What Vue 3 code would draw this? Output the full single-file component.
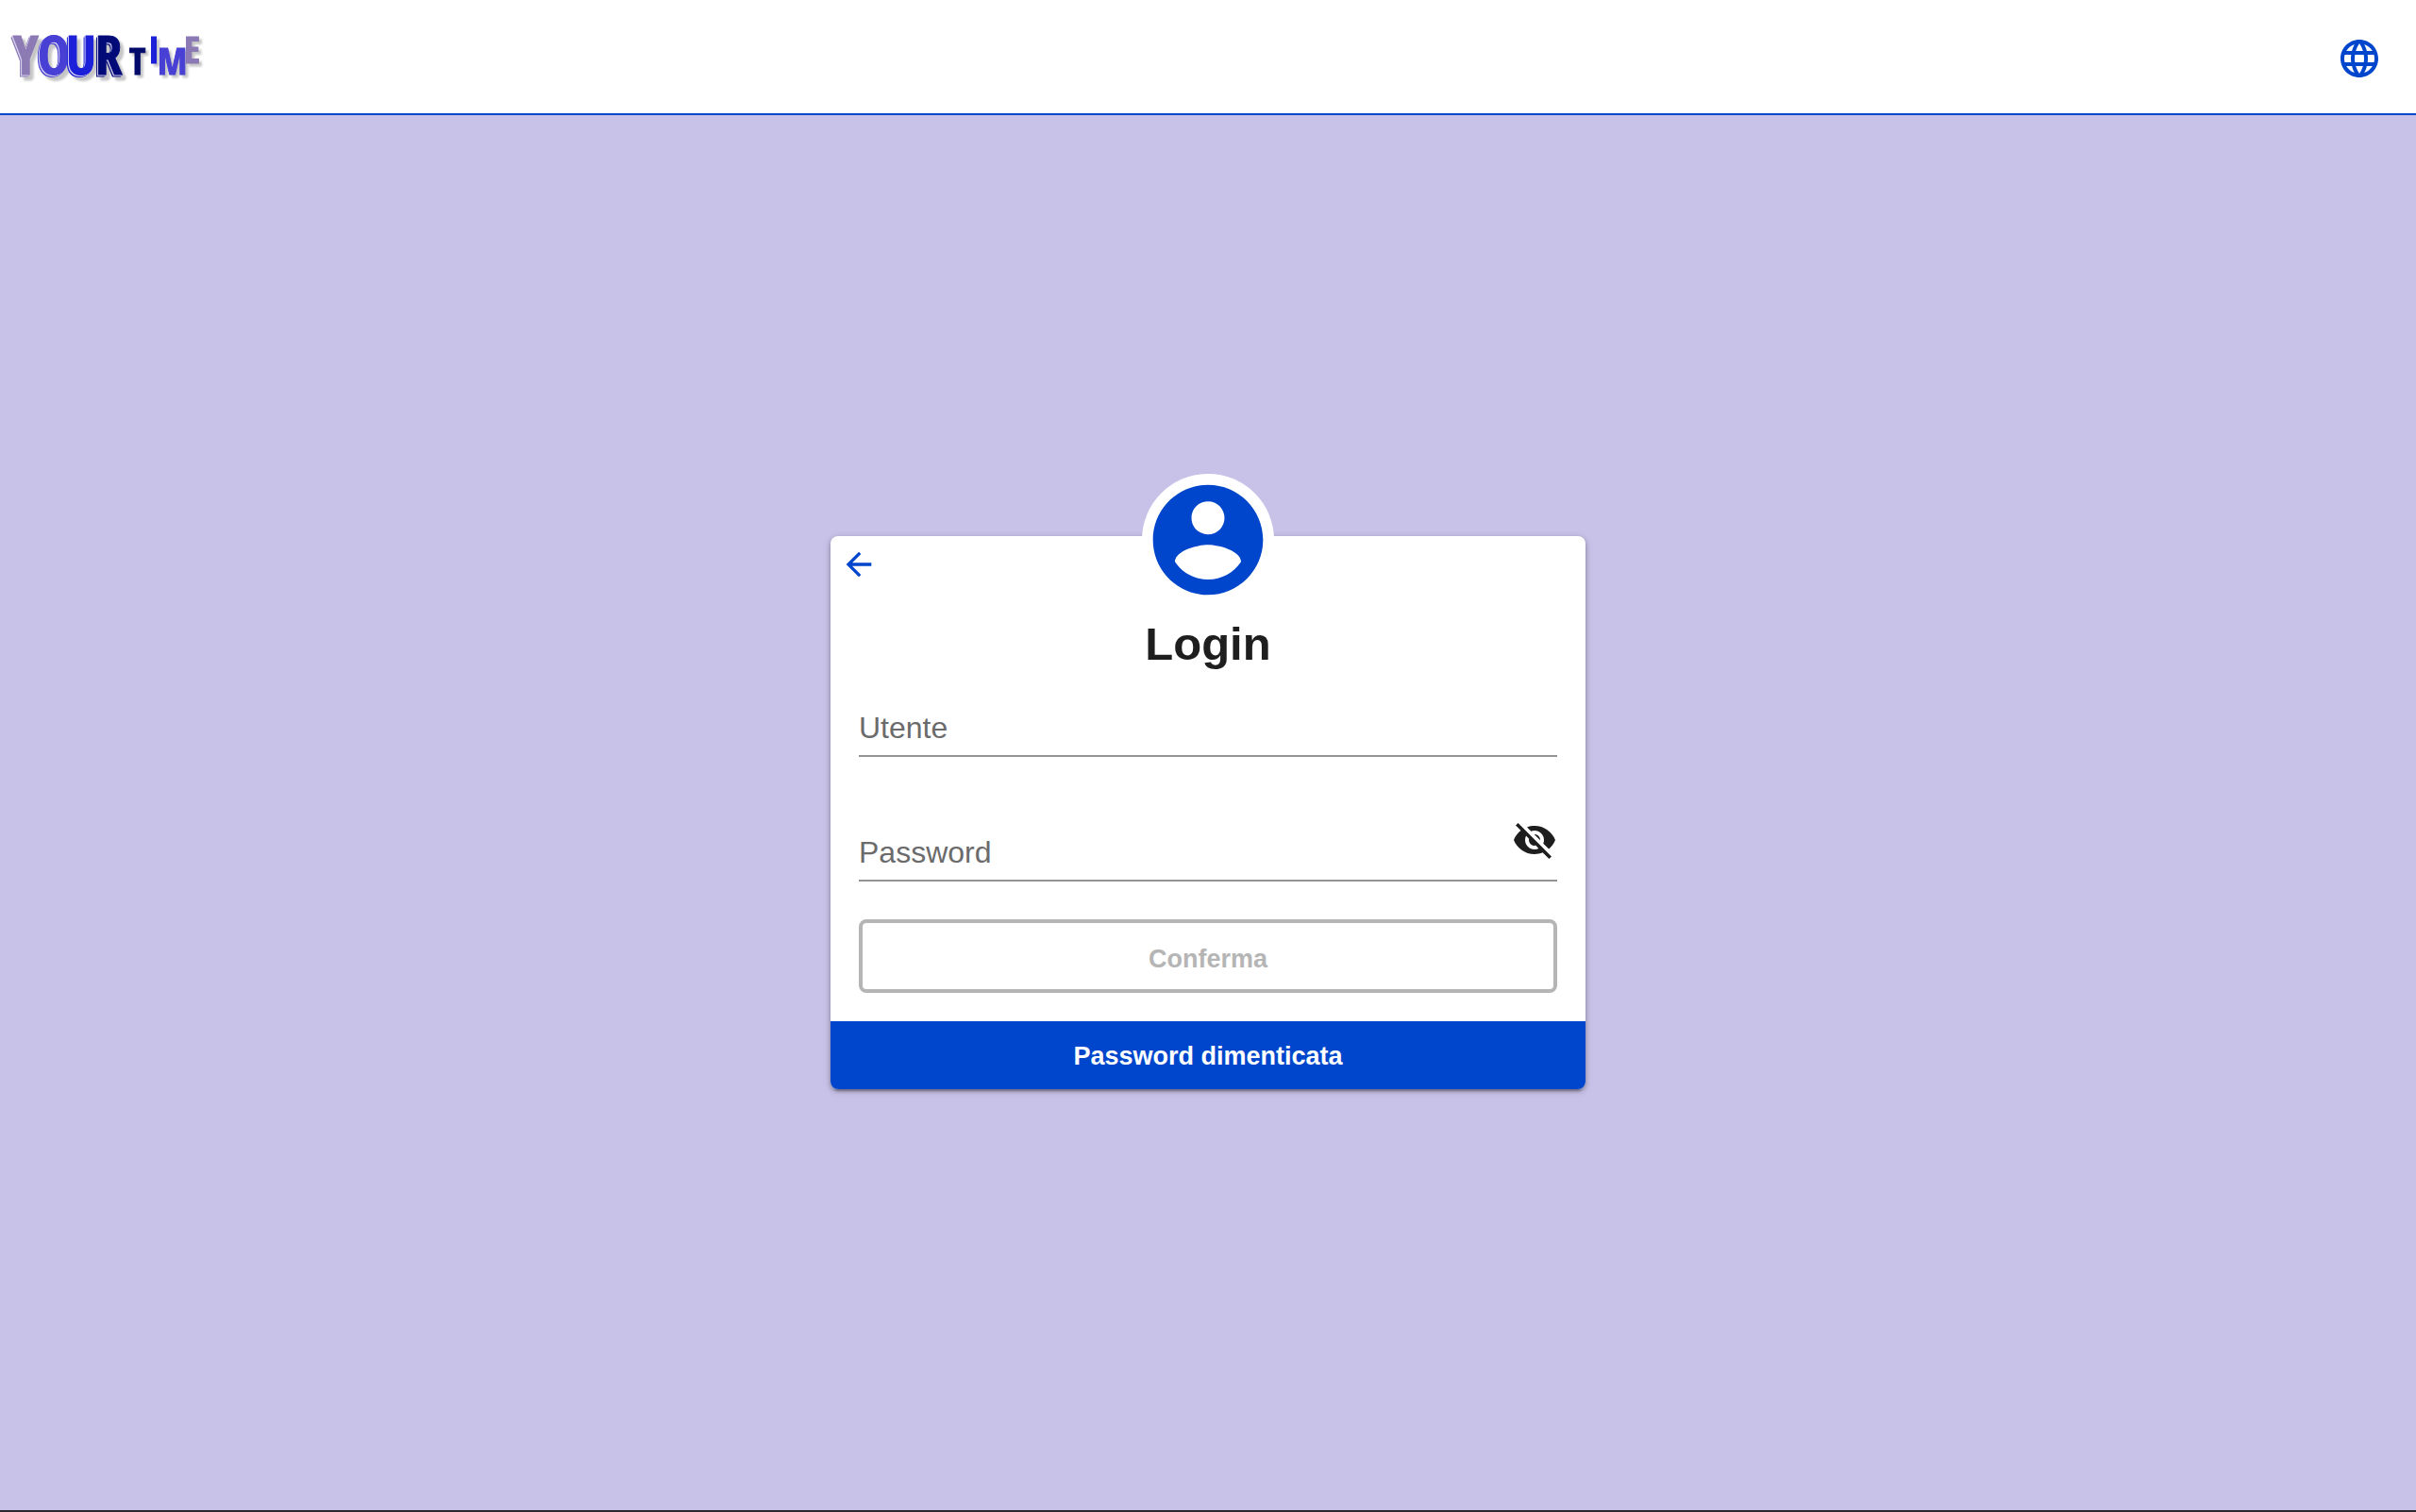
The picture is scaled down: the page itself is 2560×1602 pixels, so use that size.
<template>
  <div class="page">
    <header class="topbar">
      <a href="/" class="logo" aria-label="YOUR TIME">
        <svg width="208" height="64" viewBox="0 0 208 64">
          <g class="logo-your">
            <text v-for="l in yourLetters" :key="l.char" :x="l.x" :y="l.y" :color="l.color">{{ l.char }}</text>
          </g>
          <g class="logo-time">
            <text v-for="l in timeLetters" :key="l.char" :x="l.x" :y="l.y" :color="l.color">{{ l.char }}</text>
          </g>
        </svg>
      </a>
      <button type="button" class="icon-btn" aria-label="Lingua">
        <svg width="48" height="48" viewBox="0 0 24 24" fill="currentColor">
          <path d="M11.99 2C6.47 2 2 6.48 2 12s4.47 10 9.99 10C17.52 22 22 17.52 22 12S17.52 2 11.99 2zm6.93 6h-2.95c-.32-1.25-.78-2.45-1.38-3.56 1.84.63 3.37 1.91 4.33 3.56zM12 4.04c.83 1.2 1.48 2.53 1.91 3.96h-3.82c.43-1.43 1.08-2.76 1.91-3.96zM4.26 14C4.1 13.36 4 12.69 4 12s.1-1.36.26-2h3.38c-.08.66-.14 1.32-.14 2s.06 1.34.14 2H4.26zm.82 2h2.95c.32 1.25.78 2.45 1.38 3.56-1.84-.63-3.37-1.9-4.33-3.56zm2.95-8H5.08c.96-1.66 2.49-2.93 4.33-3.56C8.81 5.55 8.35 6.75 8.03 8zM12 19.96c-.83-1.2-1.48-2.53-1.91-3.96h3.82c-.43 1.43-1.08 2.76-1.91 3.96zM14.34 14H9.66c-.09-.66-.16-1.32-.16-2s.07-1.35.16-2h4.68c.09.65.16 1.32.16 2s-.07 1.34-.16 2zm.25 5.56c.6-1.11 1.06-2.31 1.38-3.56h2.95c-.96 1.65-2.49 2.93-4.33 3.56zM16.36 14c.08-.66.14-1.32.14-2s-.06-1.34-.14-2h3.38c.16.64.26 1.31.26 2s-.1 1.36-.26 2h-3.38z" />
        </svg>
      </button>
    </header>

    <main class="content">
      <section class="card">
        <button type="button" class="icon-btn back" aria-label="Indietro">
          <svg width="40" height="40" viewBox="0 0 24 24" fill="currentColor">
            <path d="M20 11H7.83l5.59-5.59L12 4l-8 8 8 8 1.41-1.41L7.83 13H20v-2z" />
          </svg>
        </button>
        <div class="avatar">
          <svg width="140" height="140" viewBox="0 0 24 24" fill="currentColor">
            <path d="M12 2C6.48 2 2 6.48 2 12s4.48 10 10 10 10-4.48 10-10S17.52 2 12 2zm0 3c1.66 0 3 1.34 3 3s-1.34 3-3 3-3-1.34-3-3 1.34-3 3-3zm0 14.2c-2.5 0-4.71-1.28-6-3.22.03-1.99 4-3.08 6-3.08 1.99 0 5.97 1.09 6 3.08-1.29 1.94-3.5 3.22-6 3.22z" />
          </svg>
        </div>

        <h1>Login</h1>

        <form class="form" @submit.prevent>
          <div class="field">
            <input id="user" v-model="user" type="text" autocomplete="username" />
            <label for="user" :class="{ filled: user }">Utente</label>
          </div>
          <div class="field">
            <input id="password" v-model="password" :type="visible ? 'text' : 'password'" autocomplete="current-password" />
            <label for="password" :class="{ filled: password }">Password</label>
            <button type="button" class="icon-btn eye" aria-label="Mostra password" @click="visible = !visible">
              <svg width="48" height="48" viewBox="0 0 24 24" fill="currentColor">
                <path d="M12 7c2.76 0 5 2.24 5 5 0 .65-.13 1.26-.36 1.83l2.92 2.92c1.51-1.26 2.7-2.89 3.43-4.75-1.73-4.39-6-7.5-11-7.5-1.4 0-2.74.25-3.98.7l2.16 2.16C10.74 7.13 11.35 7 12 7zM2 4.27l2.28 2.28.46.46C3.08 8.3 1.78 10.02 1 12c1.73 4.39 6 7.5 11 7.5 1.55 0 3.03-.3 4.38-.84l.42.42L19.73 22 21 20.73 3.27 3 2 4.27zM7.53 9.8l1.55 1.55c-.05.21-.08.43-.08.65 0 1.66 1.34 3 3 3 .22 0 .44-.03.65-.08l1.55 1.55c-.67.33-1.41.53-2.2.53-2.76 0-5-2.24-5-5 0-.79.2-1.53.53-2.2zm4.31-.78l3.15 3.15.02-.16c0-1.66-1.34-3-3-3l-.17.01z" />
              </svg>
            </button>
          </div>
          <button type="submit" class="confirm" :disabled="!user || !password">Conferma</button>
        </form>

        <button type="button" class="forgot">Password dimenticata</button>
      </section>
    </main>
  </div>
</template>

<script setup>
import { ref } from 'vue';

const user = ref('');
const password = ref('');
const visible = ref(false);

const yourLetters = [
  { char: 'Y', x: 2, y: 49, color: '#8c7ab5' },
  { char: 'O', x: 28, y: 49, color: '#4840d4' },
  { char: 'U', x: 58, y: 49, color: '#1c20d8' },
  { char: 'R', x: 89, y: 49, color: '#020a78' }
];

const timeLetters = [
  { char: 'T', x: 125, y: 49, color: '#020a6a' },
  { char: 'I', x: 145, y: 37, color: '#1c20d8' },
  { char: 'M', x: 155, y: 49, color: '#4840d4' },
  { char: 'E', x: 183, y: 37, color: '#8c7ab5' }
];
</script>

<style>
body { margin: 0; }
</style>

<style scoped>
.page {
  min-height: 100vh;
  box-sizing: border-box;
  display: flex;
  flex-direction: column;
  background: #c8c2e8;
  border-bottom: 2px solid #2b2830;
  font-family: "Liberation Sans", Arial, sans-serif;
  color: #1e1e1e;
}

.topbar {
  height: 122px;
  box-sizing: border-box;
  display: flex;
  align-items: center;
  justify-content: space-between;
  padding: 4px 36px 0 12px;
  background: #fff;
  border-bottom: 2px solid #0046cc;
}
.logo { display: block; }
.logo svg { display: block; overflow: visible; }
.logo text {
  font-family: "Noto Sans ExtraCondensed", "Open Sans Condensed", "Roboto Condensed", "Liberation Sans Narrow", "DejaVu Sans Condensed", sans-serif;
  font-weight: 700;
  fill: currentColor;
  stroke: currentColor;
  stroke-width: 1px;
}
.logo-your text { font-size: 57px; filter: drop-shadow(-1px 1px 0 #d9d4f0) drop-shadow(-1px 1px 0 currentColor) drop-shadow(4px 4px 1px #c6c6c6); }
.logo-time text { font-size: 40px; filter: drop-shadow(3px 3px 1px #c6c6c6); }

.icon-btn { display: block; padding: 0; border: 0; background: none; color: #0046cc; cursor: pointer; }
.icon-btn svg { display: block; }

.content { flex: 1; display: flex; align-items: center; justify-content: center; }

.card {
  position: relative;
  width: 100%;
  max-width: 800px;
  display: flex;
  flex-direction: column;
  background: #fff;
  border-radius: 8px;
  box-shadow: 0 6px 2px -4px rgba(0, 0, 0, .2), 0 2px 4px rgba(0, 0, 0, .3), 0 2px 10px rgba(0, 0, 0, .12);
}
.back { position: absolute; top: 10px; left: 10px; }
.avatar {
  position: absolute;
  top: -66px;
  left: 50%;
  margin-left: -70px;
  border-radius: 50%;
  background: #fff;
  color: #0046cc;
}
.avatar svg { display: block; }

h1 { margin: 84px 0 26px; font-size: 49px; line-height: 60px; font-weight: 700; text-align: center; }

.form { display: flex; flex-direction: column; padding: 0 30px 30px; }
.field { position: relative; margin-bottom: 68px; }
.field + .field { margin-bottom: 40px; }
.field input {
  display: block;
  width: 100%;
  height: 64px;
  box-sizing: border-box;
  padding: 12px 0 8px;
  border: 0;
  border-bottom: 2px solid #949494;
  outline: none;
  background: transparent;
  font: inherit;
  font-size: 32px;
}
.field label { position: absolute; top: 13px; left: 0; font-size: 32px; line-height: 40px; color: #6b6b6b; pointer-events: none; }
.field label.filled { top: -20px; font-size: 24px; }
.eye { position: absolute; top: -4px; right: 0; color: #1e1e1e; }

.confirm {
  height: 78px;
  padding: 6px 0 0;
  border: 4px solid #0046cc;
  border-radius: 8px;
  background: #fff;
  color: #0046cc;
  font: inherit;
  font-size: 27px;
  font-weight: 700;
}
.confirm:disabled { border-color: #b5b5b5; color: #b5b5b5; }

.forgot {
  height: 72px;
  padding: 2px 0 0;
  border: 0;
  border-radius: 0 0 8px 8px;
  background: #0046cc;
  color: #fff;
  font: inherit;
  font-size: 27px;
  font-weight: 700;
  cursor: pointer;
}
</style>
